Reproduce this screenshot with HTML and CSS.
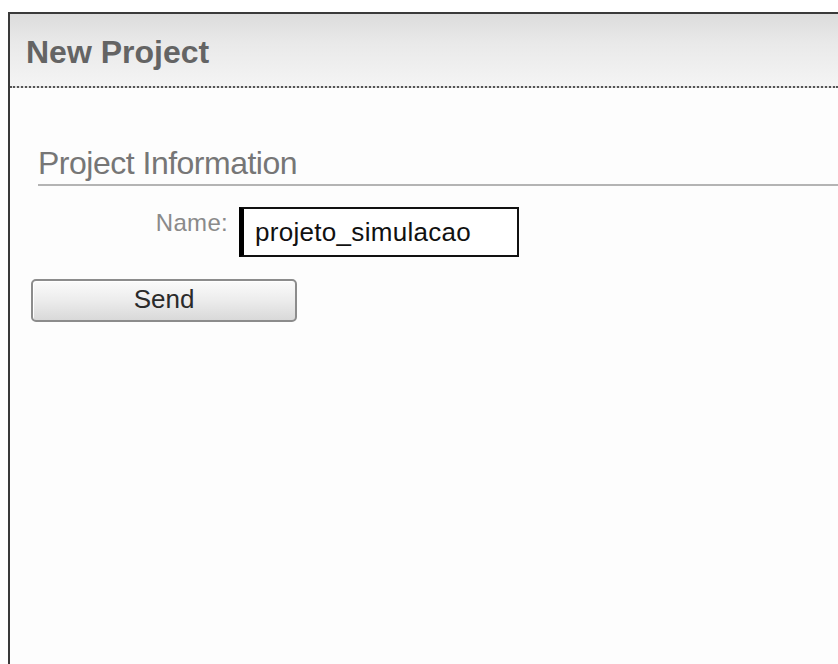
FILE: index.html
```html
<!DOCTYPE html>
<html>
<head>
<meta charset="utf-8">
<link rel="stylesheet" href="styles.css">
</head>
<body>
<div class="panel">
  <div class="panel-head"><h1>New Project</h1></div>
  <div class="panel-body">
    <fieldset class="section">
      <legend>Project Information</legend>
      <div class="row">
        <label class="label" for="name">Name:</label>
        <input class="field" id="name" type="text" value="projeto_simulacao">
      </div>
    </fieldset>
    <button class="btn" type="button">Send</button>
  </div>
</div>
</body>
</html>
```

FILE: styles.css
```css
html, body {
  margin: 0;
  padding: 0;
  background: #ffffff;
  overflow: hidden;
}
body {
  font-family: "Liberation Sans", Arial, sans-serif;
  padding: 12px 0 0 8px;
  height: 664px;
  box-sizing: border-box;
}
.panel {
  border-top: 2px solid #3a3a3a;
  border-left: 2px solid #3a3a3a;
  height: 652px;
  box-sizing: border-box;
  background: #fdfdfd;
}
.panel-head {
  height: 74px;
  box-sizing: border-box;
  padding: 22px 0 0 16px;
  background: linear-gradient(#dcdcdc, #e9e9e9 40%, #f4f4f4);
  border-bottom: 2px dotted #555;
}
.panel-head h1 {
  margin: 0;
  font-size: 32px;
  line-height: 32px;
  font-weight: bold;
  color: #646464;
}
.panel-body {
  padding: 57px 0 0 21px;
}
.section {
  border: 0;
  margin: 0;
  padding: 0 0 0 7px;
  min-width: 0;
}
.section legend {
  display: block;
  width: 100%;
  padding: 0 0 3px 0;
  font-size: 32px;
  line-height: 36px;
  letter-spacing: -0.5px;
  color: #767676;
  border-bottom: 2px solid #b4b4b4;
}
.row {
  display: flex;
  align-items: flex-start;
  margin-top: 21px;
}
.label {
  width: 190px;
  margin-right: 11px;
  text-align: right;
  font-size: 24px;
  line-height: 24px;
  letter-spacing: 0.3px;
  color: #8a8a8a;
  padding-top: 4px;
}
.field {
  width: 280px;
  height: 50px;
  box-sizing: border-box;
  border: 2px solid #111;
  border-left: 5px solid #000;
  padding: 0 0 0 11px;
  font-family: "Liberation Sans", Arial, sans-serif;
  font-size: 26px;
  letter-spacing: 0.3px;
  color: #111;
  background: #fff;
  outline: none;
}
.btn {
  display: block;
  margin-top: 22px;
  width: 266px;
  height: 43px;
  border: 2px solid #8c8c8c;
  border-radius: 5px;
  background: linear-gradient(#fbfbfb, #ececec 50%, #d9d9d9);
  font-family: "Liberation Sans", Arial, sans-serif;
  font-size: 26px;
  line-height: 26px;
  color: #2a2a2a;
  padding: 0 0 3px 0;
  box-shadow: inset 1px 1px 0 #fff;
}
```
